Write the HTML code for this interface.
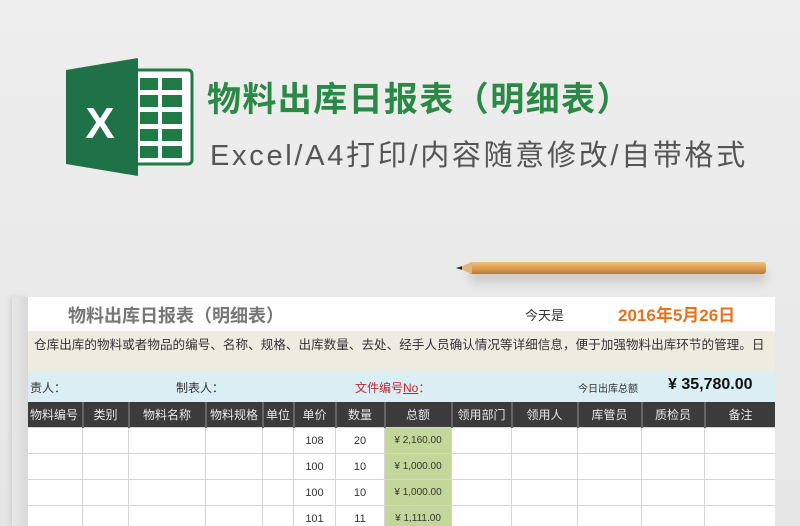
<!DOCTYPE html><html><head><meta charset="utf-8"><style>
body{margin:0;width:800px;height:526px;overflow:hidden;background:linear-gradient(#eeeeee,#e6e6e6);font-family:"Liberation Sans","Noto Sans CJK SC",sans-serif;position:relative}
.a{position:absolute}
table{border-collapse:collapse;table-layout:fixed}
td{border:1px solid #d4d4d4;height:25px;font-size:11px;text-align:center;color:#333;padding:0}
th{background:#3b3b3b;color:#e8e8e8;font-weight:normal;font-size:12px;height:25px;border-right:2px solid #666;padding:0}
</style></head><body>
<svg class="a" style="left:60px;top:52px" width="140" height="130">
<rect x="72" y="18" width="60" height="94" rx="4" fill="#fff" stroke="#1f7a45" stroke-width="3"/>
<g fill="#1f7a45"><rect x="80" y="26" width="18" height="12"/><rect x="102" y="26" width="20" height="12"/><rect x="80" y="43" width="18" height="12"/><rect x="102" y="43" width="20" height="12"/><rect x="80" y="60" width="18" height="12"/><rect x="102" y="60" width="20" height="12"/><rect x="80" y="77" width="18" height="12"/><rect x="102" y="77" width="20" height="12"/><rect x="80" y="94" width="18" height="12"/><rect x="102" y="94" width="20" height="12"/></g>
<path d="M6 18 L78 6 L78 124 L6 112 Z" fill="#1f7247"/>
<text x="40" y="86" font-size="44" font-weight="bold" fill="#fff" text-anchor="middle" font-family="Liberation Sans">X</text>
</svg>
<div class="a" style="left:207px;top:72px;font-size:34px;font-weight:bold;color:#2a8a45;letter-spacing:1.4px">物料出库日报表（明细表）</div>
<div class="a" style="left:210px;top:132px;font-size:29px;color:#555;letter-spacing:2.7px">Excel/A4打印/内容随意修改/自带格式</div>
<div class="a" style="left:470px;top:262px;width:296px;height:12px;background:linear-gradient(#f0c27a,#d9954a 60%,#b87838);border-radius:0 3px 3px 0;box-shadow:0 8px 10px rgba(0,0,0,.15)"></div>
<svg class="a" style="left:456px;top:262px" width="16" height="12"><path d="M16 0 L4 5 L0 6 L4 7 L16 12Z" fill="#e2b47a"/><path d="M6 4.2 L0 6 L6 7.8Z" fill="#222"/></svg>
<div class="a" style="left:12px;top:297px;width:16px;height:229px;background:linear-gradient(90deg,#e8e8e8,#d8d8d8);box-shadow:-2px 0 4px rgba(0,0,0,.1)"></div>
<div class="a" style="left:28px;top:297px;width:747px;height:229px;background:#fff;overflow:hidden">
<div class="a" style="left:40px;top:5px;font-size:18px;font-weight:bold;color:#777">物料出库日报表（明细表）</div>
<div class="a" style="left:497px;top:8px;font-size:13px;color:#333">今天是</div>
<div class="a" style="left:590px;top:4px;font-size:17px;font-weight:bold;color:#e8721c">2016年5月26日</div>
<div class="a" style="left:0;top:34px;width:747px;height:41px;background:#eeebe0"><div style="font-size:12.6px;color:#333;padding:3px 0 0 6px;white-space:nowrap">仓库出库的物料或者物品的编号、名称、规格、出库数量、去处、经手人员确认情况等详细信息，便于加强物料出库环节的管理。日</div></div>
<div class="a" style="left:0;top:75px;width:747px;height:30px;background:#daeef3;font-size:12px;color:#333">
<span class="a" style="left:2px;top:7px">责人：</span><span class="a" style="left:148px;top:7px">制表人：</span><span class="a" style="left:327px;top:7px;color:#c0282d">文件编号<u>No</u>：</span><span class="a" style="left:550px;top:8px;font-size:10px">今日出库总额</span><span class="a" style="left:640px;top:4px;font-size:16px;font-weight:bold;color:#111">¥ 35,780.00</span></div>
<table class="a" style="left:-2px;top:105px;width:750px">
<colgroup><col style="width:56px"><col style="width:46px"><col style="width:77px"><col style="width:57px"><col style="width:31px"><col style="width:42px"><col style="width:49px"><col style="width:67px"><col style="width:60px"><col style="width:66px"><col style="width:64px"><col style="width:63px"><col style="width:72px"></colgroup>
<tr><th>物料编号</th><th>类别</th><th>物料名称</th><th>物料规格</th><th>单位</th><th>单价</th><th>数量</th><th>总额</th><th>领用部门</th><th>领用人</th><th>库管员</th><th>质检员</th><th>备注</th></tr>
<tr><td></td><td></td><td></td><td></td><td></td><td>108</td><td>20</td><td style="background:#c4d79b;font-size:10px">¥ 2,160.00</td><td></td><td></td><td></td><td></td><td></td></tr>
<tr><td></td><td></td><td></td><td></td><td></td><td>100</td><td>10</td><td style="background:#c4d79b;font-size:10px">¥ 1,000.00</td><td></td><td></td><td></td><td></td><td></td></tr>
<tr><td></td><td></td><td></td><td></td><td></td><td>100</td><td>10</td><td style="background:#c4d79b;font-size:10px">¥ 1,000.00</td><td></td><td></td><td></td><td></td><td></td></tr>
<tr><td></td><td></td><td></td><td></td><td></td><td>101</td><td>11</td><td style="background:#c4d79b;font-size:10px">¥ 1,111.00</td><td></td><td></td><td></td><td></td><td></td></tr>
</table></div>
</body></html>
